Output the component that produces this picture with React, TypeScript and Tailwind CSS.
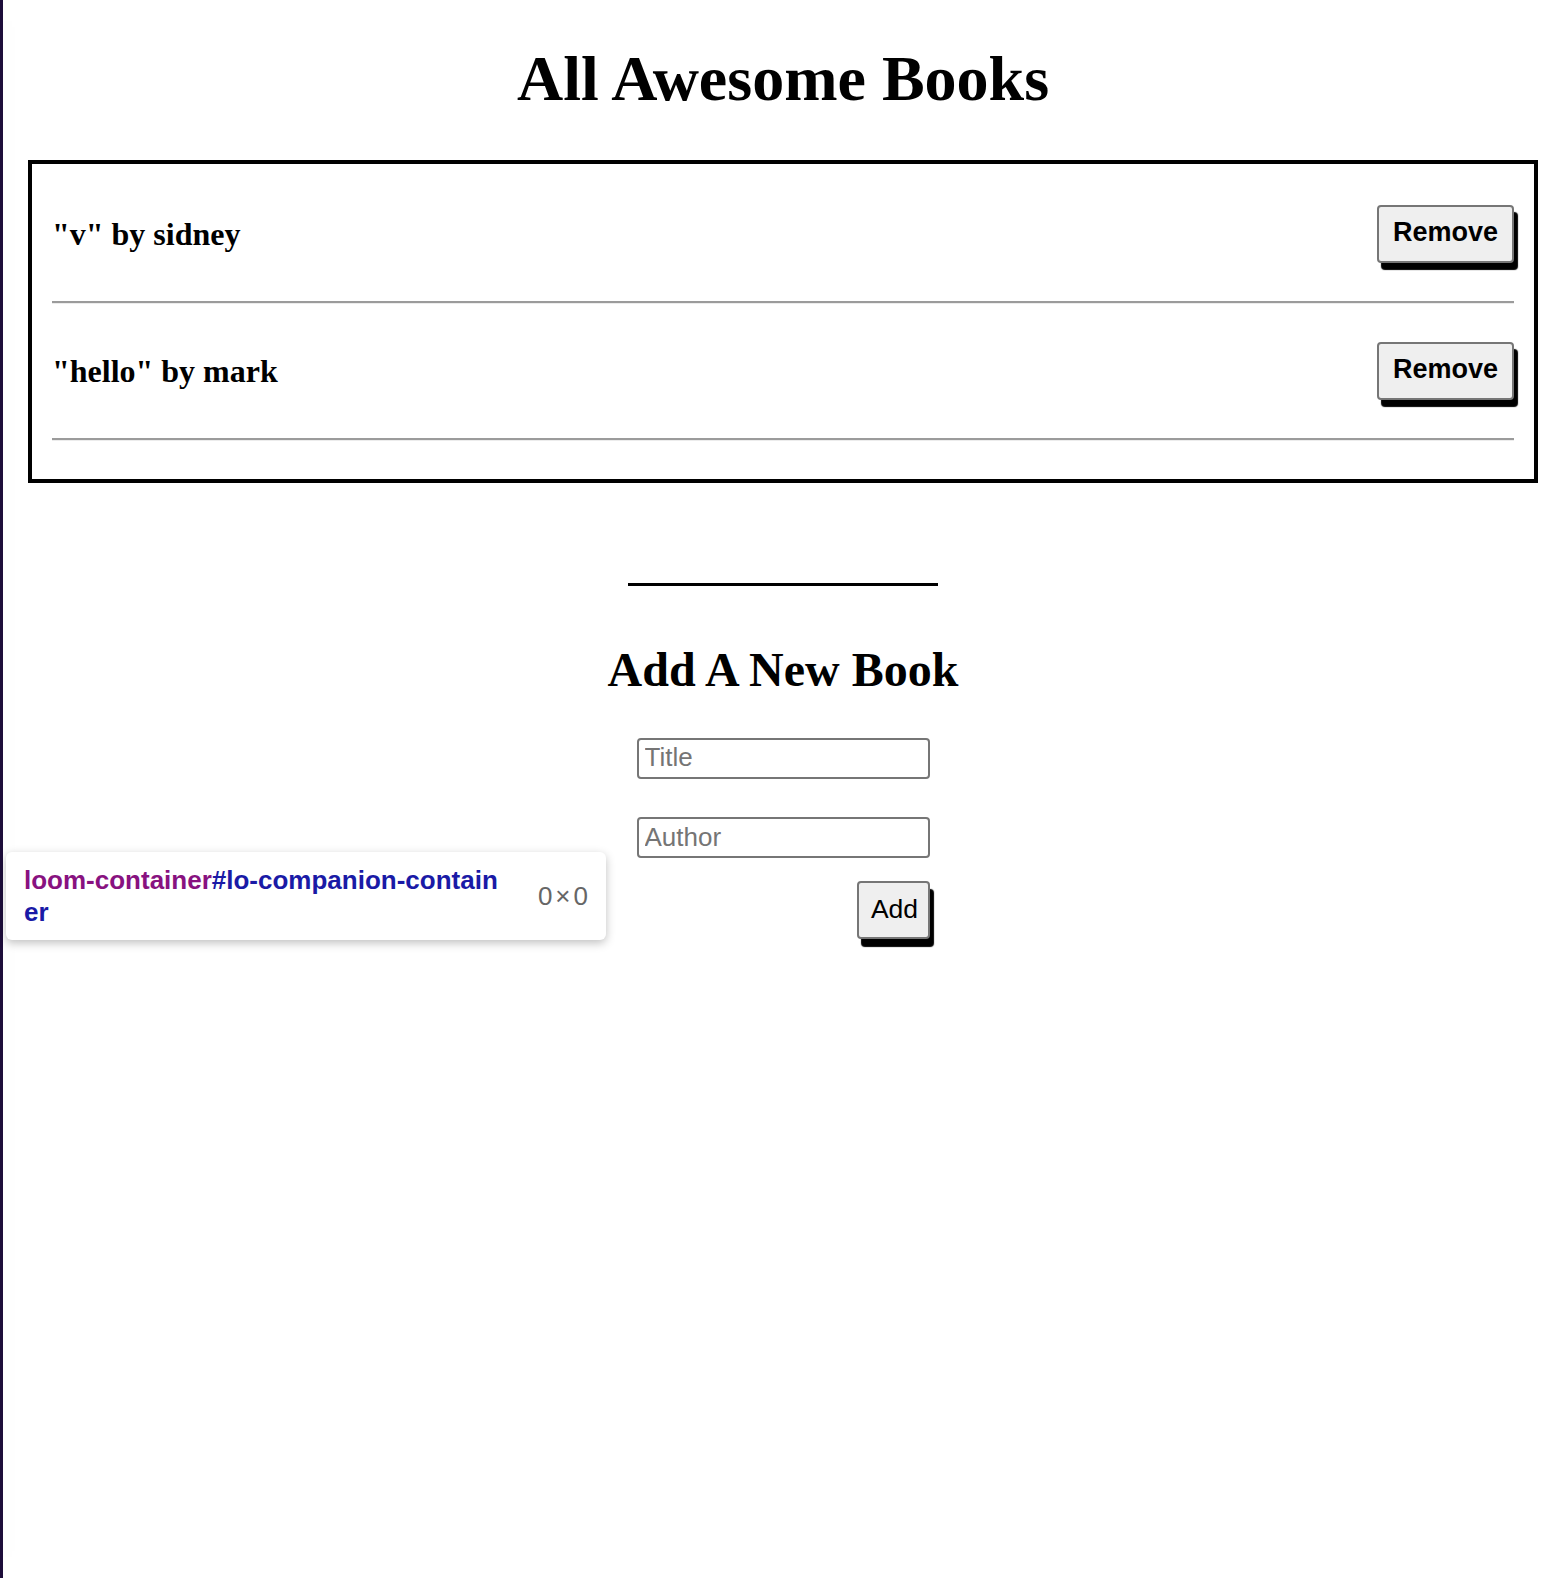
import React from "react";

interface Book {
  id: number;
  title: string;
  author: string;
}

const books: Book[] = [
  { id: 1, title: "v", author: "sidney" },
  { id: 2, title: "hello", author: "mark" },
];

const serif = "font-['Liberation_Serif','Times_New_Roman',serif]";
const sans = "font-['Liberation_Sans',Arial,sans-serif]";

const App = () => {
  return (
    <div className="relative flex min-h-screen bg-white text-black">
      <div className="w-[3px] shrink-0 bg-[#1d0d3a] shadow-[6px_0_30px_rgba(0,0,0,0.05)]" />

      <main className="ml-[25px] mr-[16px] flex flex-1 flex-col">
        <h1 className={`${serif} mt-[42px] text-center text-[64px] font-bold leading-[74px]`}>
          All Awesome Books
        </h1>

        <section className="mt-[44px] border-4 border-black px-[20px] pt-[3px] pb-[38px]">
          {books.map((book) => (
            <div key={book.id}>
              <div className="flex items-center justify-between py-[38px]">
                <p className={`${serif} text-[32px] font-bold leading-[37px]`}>
                  "{book.title}" by {book.author}
                </p>
                <button
                  className={`${sans} h-[58px] rounded-[4px] border-2 border-[#767676] bg-[#efefef] px-[14px] pb-[3px] text-[27px] font-bold shadow-[4px_7px_1px_#000]`}
                >
                  Remove
                </button>
              </div>
              <div className="border-t-2 border-b border-t-[#9b9b9b] border-b-[#ececec]" />
            </div>
          ))}
        </section>

        <div className="mx-auto mt-[100px] h-[3px] w-[310px] bg-black" />

        <h2 className={`${serif} mt-[56px] text-center text-[48px] font-bold leading-[56px]`}>
          Add A New Book
        </h2>

        <form className="mx-auto mt-[40px] flex w-[293px] flex-col" onSubmit={(e) => e.preventDefault()}>
          <input
            type="text"
            placeholder="Title"
            className={`${sans} h-[41px] rounded-[4px] border-2 border-[#767676] px-[6px] pb-[2px] text-[26px] placeholder:text-[#757575]`}
          />
          <input
            type="text"
            placeholder="Author"
            className={`${sans} mt-[38px] h-[41px] rounded-[4px] border-2 border-[#767676] px-[6px] text-[26px] placeholder:text-[#757575]`}
          />
          <button
            type="submit"
            className={`${sans} mt-[23px] ml-auto h-[58px] w-[73px] rounded-[4px] border-2 border-[#767676] bg-[#efefef] pl-[3px] text-[26.5px] shadow-[4px_8px_1px_#000]`}
          >
            Add
          </button>
        </form>
      </main>

      <div className="absolute left-[6px] top-[852px] flex h-[88px] w-[600px] items-center justify-between rounded-[6px] bg-white pl-[18px] pr-[18px] shadow-[0_3px_10px_rgba(0,0,0,0.25)]">
        <p className={`${sans} text-[26px] font-semibold leading-[32px]`}>
          <span className="text-[#881280]">loom-container</span>
          <span className="text-[#1a1aa6]">
            #lo-companion-contain
            <br />
            er
          </span>
        </p>
        <span className={`${sans} text-[26px] text-[#666]`}>
          0<span className="mx-[3px]">×</span>0
        </span>
      </div>
    </div>
  );
};

export default App;
